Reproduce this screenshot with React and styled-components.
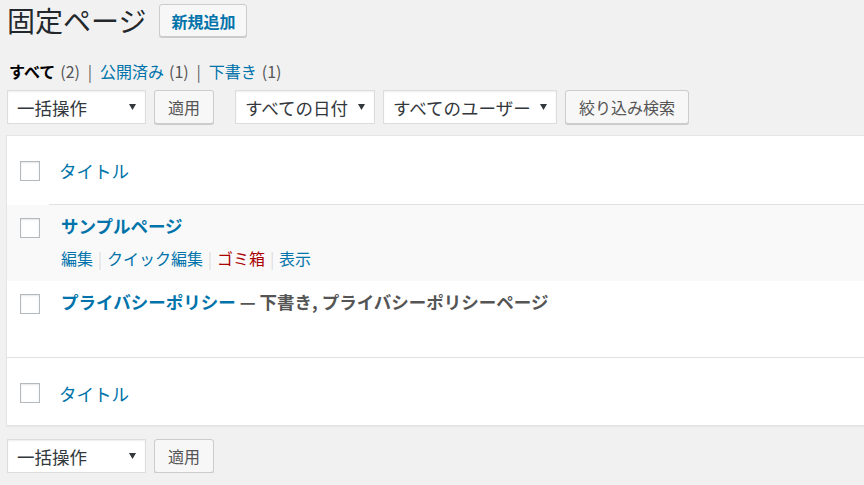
import React from "react";
import styled, { createGlobalStyle } from "styled-components";

const GlobalStyle = createGlobalStyle`
  html, body {
    margin: 0;
    padding: 0;
    background: #f1f1f1;
    overflow: hidden;
  }
  body {
    font-family: "Noto Sans CJK JP", "Noto Sans", sans-serif;
    color: #444;
  }
`;

const Page = styled.div`
  padding: 0 0 0 7px;
`;

const TitleBar = styled.div`
  display: flex;
  align-items: center;
  gap: 13px;
  height: 41px;
`;

const Heading = styled.h1`
  margin: 0;
  font-size: 28px;
  font-weight: 400;
  line-height: 41px;
  color: #23282d;
`;

const Button = styled.button`
  box-sizing: border-box;
  height: ${(p) => p.$h || 34}px;
  padding: 0 ${(p) => p.$px || 13}px;
  border: 1px solid #ccc;
  border-radius: 3px;
  background: #f7f7f7;
  box-shadow: 0 1px 0 #ccc;
  font-family: inherit;
  font-size: 16px;
  line-height: 1;
  font-weight: ${(p) => (p.$primary ? 700 : 400)};
  color: ${(p) => (p.$primary ? "#0073aa" : "#555")};
  cursor: pointer;
  white-space: nowrap;
`;

const StatusList = styled.ul`
  list-style: none;
  margin: 17px 0 0 2px;
  padding: 0;
  display: flex;
  height: 26px;
  line-height: 26px;
  font-size: 16px;
  color: #666;
`;

const StatusItem = styled.li`
  display: flex;
`;

const StatusLabel = styled.span`
  color: ${(p) => (p.$current ? "#000" : "#0073aa")};
  font-weight: ${(p) => (p.$current ? 700 : 400)};
`;

const Count = styled.span`
  margin-left: 5px;
  color: #555;
`;

const StatusSep = styled.span`
  display: inline-block;
  width: 20px;
  text-align: center;
  color: #666;
`;

const Toolbar = styled.div`
  display: flex;
  align-items: center;
  height: 34px;
  margin-top: ${(p) => p.$mt}px;
`;

const Group = styled.div`
  display: flex;
  gap: 8px;
  margin-left: ${(p) => p.$ml || 0}px;
`;

const Select = styled.div`
  box-sizing: border-box;
  width: ${(p) => p.$w}px;
  height: 34px;
  display: flex;
  align-items: center;
  justify-content: space-between;
  padding: 0 9px 0 9px;
  background: #fff;
  border: 1px solid #ddd;
  box-shadow: inset 0 1px 2px rgba(0, 0, 0, 0.07);
  font-size: 17.5px;
  color: #32373c;
  white-space: nowrap;
`;

const Arrow = () => (
  <svg width="7" height="6" viewBox="0 0 7 6">
    <polygon points="0,0 7,0 3.5,6" fill="#32373c" />
  </svg>
);

const Panel = styled.div`
  margin: 11px -40px 0 -1px;
  background: #fff;
  border: 1px solid #e5e5e5;
  box-shadow: 0 1px 1px rgba(0, 0, 0, 0.04);
`;

const HeadRow = styled.div`
  display: flex;
  height: 69px;
`;

const BodyRow = styled.div`
  display: flex;
  align-items: flex-start;
  height: 76px;
  background: ${(p) => (p.$alt ? "#f9f9f9" : "#fff")};
`;

const FootRow = styled.div`
  box-sizing: border-box;
  display: flex;
  align-items: center;
  height: 68px;
  padding-top: 3px;
  border-top: 1px solid #e1e1e1;
`;

const CheckCell = styled.div`
  box-sizing: border-box;
  width: 42px;
  flex: none;
  padding-left: 13px;
  padding-top: ${(p) => p.$pt || 0}px;
  display: flex;
  align-items: ${(p) => (p.$pt ? "flex-start" : "center")};
`;

const HeadTitleCell = styled.div`
  flex: 1;
  display: flex;
  align-items: center;
  padding-left: 10px;
  border-bottom: ${(p) => (p.$border ? "1px solid #e1e1e1" : "none")};
  font-size: 17.5px;
  color: #0073aa;
`;

const TitleCell = styled.div`
  flex: 1;
  padding: 8px 0 0 12px;
`;

const RowTitle = styled.div`
  font-size: 17.5px;
  font-weight: 700;
  line-height: 26px;
  color: #0073aa;
  white-space: nowrap;
`;

const PostState = styled.span`
  color: #555;
`;

const RowActions = styled.div`
  margin-top: 8px;
  display: flex;
  font-size: 16px;
  line-height: 22px;
`;

const Action = styled.span`
  color: ${(p) => (p.$danger ? "#a00" : "#0073aa")};
`;

const ActionSep = styled.span`
  display: inline-block;
  width: 14px;
  text-align: center;
  color: #ddd;
`;

const Checkbox = styled.span`
  display: block;
  box-sizing: border-box;
  width: 20px;
  height: 20px;
  border: 1px solid #b4b9be;
  background: #fff;
  box-shadow: inset 0 1px 2px rgba(0, 0, 0, 0.1);
`;

const statuses = [
  { label: "すべて", count: 2, current: true },
  { label: "公開済み", count: 1 },
  { label: "下書き", count: 1 },
];

const actions = [
  { label: "編集" },
  { label: "クイック編集" },
  { label: "ゴミ箱", danger: true },
  { label: "表示" },
];

function BulkBar() {
  return (
    <Group>
      <Select $w={139}>
        <span>一括操作</span>
        <Arrow />
      </Select>
      <Button>適用</Button>
    </Group>
  );
}

export default function App() {
  return (
    <>
      <GlobalStyle />
      <Page>
        <TitleBar>
          <Heading>固定ページ</Heading>
          <Button $primary $h={33} $px={11}>
            新規追加
          </Button>
        </TitleBar>

        <StatusList>
          {statuses.map((s, i) => (
            <StatusItem key={s.label}>
              <StatusLabel $current={s.current}>{s.label}</StatusLabel>
              <Count>({s.count})</Count>
              {i < statuses.length - 1 && <StatusSep>|</StatusSep>}
            </StatusItem>
          ))}
        </StatusList>

        <Toolbar $mt={6}>
          <BulkBar />
          <Group $ml={21}>
            <Select $w={140}>
              <span>すべての日付</span>
              <Arrow />
            </Select>
            <Select $w={174}>
              <span>すべてのユーザー</span>
              <Arrow />
            </Select>
            <Button>絞り込み検索</Button>
          </Group>
        </Toolbar>

        <Panel>
          <HeadRow>
            <CheckCell>
              <Checkbox />
            </CheckCell>
            <HeadTitleCell $border>タイトル</HeadTitleCell>
          </HeadRow>

          <BodyRow $alt>
            <CheckCell $pt={13}>
              <Checkbox />
            </CheckCell>
            <TitleCell>
              <RowTitle>サンプルページ</RowTitle>
              <RowActions>
                {actions.map((a, i) => (
                  <React.Fragment key={a.label}>
                    <Action $danger={a.danger}>{a.label}</Action>
                    {i < actions.length - 1 && <ActionSep>|</ActionSep>}
                  </React.Fragment>
                ))}
              </RowActions>
            </TitleCell>
          </BodyRow>

          <BodyRow>
            <CheckCell $pt={13}>
              <Checkbox />
            </CheckCell>
            <TitleCell>
              <RowTitle>
                プライバシーポリシー
                <PostState> — 下書き, プライバシーポリシーページ</PostState>
              </RowTitle>
            </TitleCell>
          </BodyRow>

          <FootRow>
            <CheckCell>
              <Checkbox />
            </CheckCell>
            <HeadTitleCell>タイトル</HeadTitleCell>
          </FootRow>
        </Panel>

        <Toolbar $mt={13}>
          <BulkBar />
        </Toolbar>
      </Page>
    </>
  );
}
